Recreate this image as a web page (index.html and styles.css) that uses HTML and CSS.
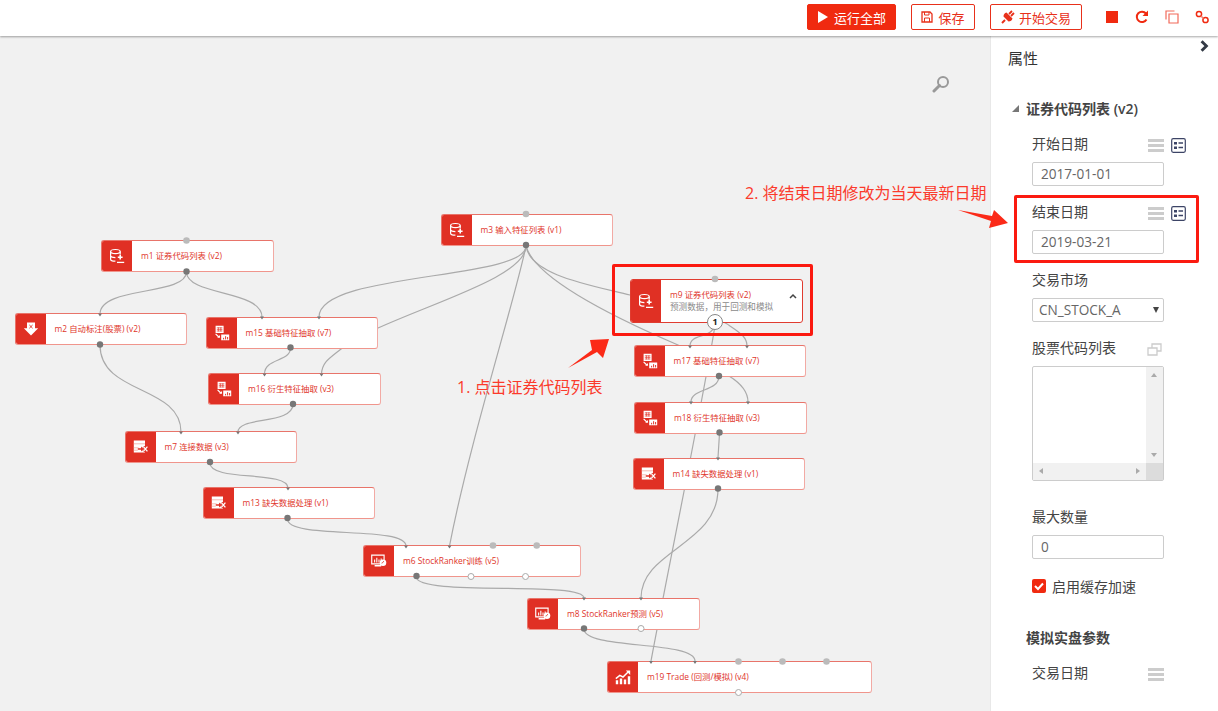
FILE: index.html
```html
<!DOCTYPE html>
<html lang="zh">
<head>
<meta charset="utf-8">
<title>策略画布</title>
<link rel="stylesheet" href="styles.css">
</head>
<body>
<svg class="defs" width="0" height="0" aria-hidden="true">
  <defs>
    <symbol id="i-db" viewBox="0 0 20 20">
      <ellipse cx="8" cy="4.500" rx="6" ry="2.600" fill="none" stroke="#fff" stroke-width="1.500"/>
      <path d="M2 4.500V14c0 1.500 3 2.500 6 2.500M14 4.500V8M2 9.500c0 1.500 3 2.500 6 2.500" fill="none" stroke="#fff" stroke-width="1.500"/>
      <path d="M14 8.500v6M11 11.500h6" stroke="#fff" stroke-width="2"/>
      <path d="M10 18h9" stroke="#fff" stroke-width="1.600"/>
    </symbol>
    <symbol id="i-down" viewBox="0 0 20 20">
      <path d="M5 2h10v7h4l-9 9-9-9h4z" fill="#fff"/>
      <path d="M8 5l4 4M12 5l-4 4" stroke="#e03024" stroke-width="1.200"/>
    </symbol>
    <symbol id="i-feat" viewBox="0 0 20 20">
      <path d="M2 1h10v9H2z" fill="#fff"/>
      <path d="M3.500 3.500h7M3.500 5.500h7M3.500 7.500h7M5.500 3v5M8.500 3v5" stroke="#e03024" stroke-width=".8"/>
      <path d="M2 11l4 4" stroke="#fff" stroke-width="1.500"/>
      <path d="M4 16h3.500v-3.500z" fill="#fff"/>
      <path d="M9 12h10v7H9z" fill="#fff"/>
      <path d="M12 18v-2M14.500 18v-4M17 18v-3" stroke="#e03024" stroke-width="1.200"/>
    </symbol>
    <symbol id="i-fix" viewBox="0 0 20 20">
      <path d="M1 2h14v15H1z" fill="#fff"/>
      <path d="M1 6h14M1 11h6M1 14h5" stroke="#f0a8a0" stroke-width="1"/>
      <path d="M6 12.500h6" stroke="#e03024" stroke-width="2"/>
      <path d="M10 9.500l3 3-3 3z" fill="#e03024"/>
      <path d="M13 9.500l5 6M18 9.500l-5 6" stroke="#e03024" stroke-width="3.600"/>
      <path d="M13 9.500l5 6M18 9.500l-5 6" stroke="#fff" stroke-width="1.600"/>
    </symbol>
    <symbol id="i-screen" viewBox="0 0 22 20">
      <path d="M1 2h17v12H1z" fill="none" stroke="#fff" stroke-width="1.600"/>
      <path d="M5 12V8M8 12V5.500M11 12V8M14 12V6.500" stroke="#fff" stroke-width="1.500"/>
      <path d="M5 16.500h9" stroke="#fff" stroke-width="1.800"/>
      <circle cx="16.500" cy="12.500" r="4.500" fill="#fff"/>
      <path d="M14.500 13l2-1 1-2" stroke="#e03024" stroke-width="1" fill="none"/>
    </symbol>
    <symbol id="i-trade" viewBox="0 0 20 20">
      <path d="M1 12l5-4 4 2 7-7" fill="none" stroke="#fff" stroke-width="1.800"/>
      <path d="M13.500 2H19v5.500z" fill="#fff"/>
      <path d="M1 14h3v5H1zM6 12h3v7H6zM11 13h3v6h-3zM16 9h3v10h-3z" fill="#fff"/>
    </symbol>
  </defs>
</svg>

<header class="toolbar">
  <button class="btn btn-run" type="button">
    <svg class="btn-icon" viewBox="0 0 12 14"><path d="M1 1l10 6-10 6z" fill="#fff"/></svg>运行全部
  </button>
  <button class="btn btn-save" type="button">
    <svg class="btn-icon-sm" viewBox="0 0 12 12"><path d="M1 1h8l2 2v8H1z" fill="none" stroke="#e8301a" stroke-width="1.300"/><path d="M3.500 1v3h4.500V1M3.500 11V7h5v4" fill="none" stroke="#e8301a" stroke-width="1"/></svg>保存
  </button>
  <button class="btn btn-trade" type="button">
    <svg class="btn-icon btn-icon-plug" viewBox="0 0 14 14"><path d="M1 13l3-3" stroke="#e8301a" stroke-width="2"/><path d="M2.500 6.500l5 5c2 0 3.500-1 4-3L5.500 2.500c-2 .5-3 2-3 4z" fill="#e8301a"/><path d="M8 4l3-3M10 6l3-3" stroke="#e8301a" stroke-width="1.800"/></svg>开始交易
  </button>
  <div class="tools">
    <svg class="tool" viewBox="0 0 16 16"><path d="M2 2h12v12H2z" fill="#f02a10"/></svg>
    <svg class="tool" viewBox="0 0 16 16"><path d="M12.500 10.500A5.200 5.200 0 1 1 12 4.500" fill="none" stroke="#f02a10" stroke-width="2"/><path d="M14 1.500v5.500H8.500z" fill="#f02a10"/></svg>
    <svg class="tool" viewBox="0 0 16 16"><path d="M2 10.500V2h8.500M5 5h9v9H5z" fill="none" stroke="#f26a5a" stroke-width="1.200"/></svg>
    <svg class="tool" viewBox="0 0 16 16"><circle cx="5" cy="5" r="2.600" fill="none" stroke="#f02a10" stroke-width="1.500"/><circle cx="11.500" cy="11" r="2.600" fill="none" stroke="#f02a10" stroke-width="1.500"/><path d="M7 7l2.500 2.500" stroke="#f4806f" stroke-width="1.500"/></svg>
  </div>
</header>

<main class="workspace">
  <section class="canvas">
    <svg class="edges" viewBox="0 36 990 675" aria-hidden="true">
      <g fill="none" stroke="#aaa" stroke-width="1.200">
        <path d="M186.500 272C186 296 100 286 100 314"/>
        <path d="M186.500 272C187 296 262 290 262 317"/>
        <path d="M526 246C526 280 319 272 319 317"/>
        <path d="M526 246C526 275 440 300 378 328C360 336 350 340 341 349C330 358 322 362 321.500 374"/>
        <path d="M526 246C515 300 470 440 449.500 546"/>
        <path d="M526 246C530 275 590 285 630 295C680 305 720 318 730 326C742 334 747 338 747 346"/>
        <path d="M526 246C535 280 620 320 678 345C700 358 720 368 729 376C742 384 748 392 748 402"/>
        <path d="M100 345C100 395 181 385 181 432"/>
        <path d="M293 404C293 425 238 416 238 432"/>
        <path d="M210 463C210 482 288 470 288 488"/>
        <path d="M287.500 519C287.500 540 406 525 406 546"/>
        <path d="M416.500 577C416.500 597 584 580 584 598"/>
        <path d="M718 489C718 545 641 550 641 598"/>
        <path d="M584 629C584 650 695 640 695 661"/>
        <path d="M719.500 433L718 458"/>
        <path d="M719 376C719 392 691 388 691 402"/>
        <path d="M290.500 348C290.500 362 264.500 358 264.500 374"/>
        <path d="M715 322C715 340 690 332 690 346"/>
        <path d="M715 325C708 375 665 585 651 661"/>
      </g>
    </svg>

    <div class="node n-m1"><div class="node-icon"><svg class="ico"><use href="#i-db"/></svg></div><div class="node-body"><p class="node-title">m1 证券代码列表 (v2)</p></div></div>
    <div class="node n-m2"><div class="node-icon"><svg class="ico"><use href="#i-down"/></svg></div><div class="node-body"><p class="node-title">m2 自动标注(股票) (v2)</p></div></div>
    <div class="node n-m3"><div class="node-icon"><svg class="ico"><use href="#i-db"/></svg></div><div class="node-body"><p class="node-title">m3 输入特征列表 (v1)</p></div></div>
    <div class="node n-m15"><div class="node-icon"><svg class="ico"><use href="#i-feat"/></svg></div><div class="node-body"><p class="node-title">m15 基础特征抽取 (v7)</p></div></div>
    <div class="node n-m16"><div class="node-icon"><svg class="ico"><use href="#i-feat"/></svg></div><div class="node-body"><p class="node-title">m16 衍生特征抽取 (v3)</p></div></div>
    <div class="node n-m7"><div class="node-icon"><svg class="ico"><use href="#i-fix"/></svg></div><div class="node-body"><p class="node-title">m7 连接数据 (v3)</p></div></div>
    <div class="node n-m13"><div class="node-icon"><svg class="ico"><use href="#i-fix"/></svg></div><div class="node-body"><p class="node-title">m13 缺失数据处理 (v1)</p></div></div>
    <div class="node n-m6 node-wide"><div class="node-icon"><svg class="ico"><use href="#i-screen"/></svg></div><div class="node-body"><p class="node-title">m6 StockRanker训练 (v5)</p></div></div>
    <div class="node n-m9 node-open"><div class="node-icon"><svg class="ico"><use href="#i-db"/></svg></div><div class="node-body"><p class="node-title">m9 证券代码列表 (v2)</p><p class="node-desc">预测数据，用于回测和模拟</p></div><svg class="node-caret" viewBox="0 0 8 6"><path d="M1 5l3-3 3 3" fill="none" stroke="#444" stroke-width="1.500"/></svg></div>
    <div class="node n-m17"><div class="node-icon"><svg class="ico"><use href="#i-feat"/></svg></div><div class="node-body"><p class="node-title">m17 基础特征抽取 (v7)</p></div></div>
    <div class="node n-m18"><div class="node-icon"><svg class="ico"><use href="#i-feat"/></svg></div><div class="node-body"><p class="node-title">m18 衍生特征抽取 (v3)</p></div></div>
    <div class="node n-m14"><div class="node-icon"><svg class="ico"><use href="#i-fix"/></svg></div><div class="node-body"><p class="node-title">m14 缺失数据处理 (v1)</p></div></div>
    <div class="node n-m8"><div class="node-icon"><svg class="ico"><use href="#i-screen"/></svg></div><div class="node-body"><p class="node-title">m8 StockRanker预测 (v5)</p></div></div>
    <div class="node n-m19 node-wide"><div class="node-icon"><svg class="ico"><use href="#i-trade"/></svg></div><div class="node-body"><p class="node-title">m19 Trade (回测/模拟) (v4)</p></div></div>

    <svg class="ports" viewBox="0 36 990 675" aria-hidden="true">
      <g fill="#bbb">
        <circle cx="186.500" cy="240.500" r="3.300"/><circle cx="526" cy="214" r="3.300"/><circle cx="715" cy="279" r="3.300"/>
        <circle cx="493" cy="545.500" r="3.300"/><circle cx="536.700" cy="545.500" r="3.300"/>
        <circle cx="738.500" cy="661.500" r="3.300"/><circle cx="782.500" cy="661.500" r="3.300"/><circle cx="826.500" cy="661.500" r="3.300"/>
      </g>
      <g fill="#777">
        <circle cx="186.500" cy="271.500" r="3.200"/><circle cx="100" cy="344.500" r="3.200"/><circle cx="526" cy="245" r="3.200"/>
        <circle cx="290.500" cy="347.500" r="3.200"/><circle cx="293" cy="404" r="3.200"/><circle cx="210" cy="462" r="3.200"/>
        <circle cx="287.500" cy="518" r="3.200"/><circle cx="416.500" cy="576" r="3.200"/><circle cx="719" cy="376" r="3.200"/>
        <circle cx="719.500" cy="432.500" r="3.200"/><circle cx="718" cy="488.500" r="3.200"/><circle cx="584" cy="628.500" r="3.200"/>
      </g>
      <g fill="#777">
        <path d="M98 313.500h4l-2 3zM260 316.500h4l-2 3zM317 316.500h4l-2 3zM262.500 373.500h4l-2 3zM319.500 373.500h4l-2 3zM179 431.500h4l-2 3zM236 431.500h4l-2 3zM286 487.500h4l-2 3zM404 545.500h4l-2 3zM447.500 545.500h4l-2 3zM688 345.500h4l-2 3zM745 345.500h4l-2 3zM689 401.500h4l-2 3zM746 401.500h4l-2 3zM716 457.500h4l-2 3zM582 597.500h4l-2 3zM639 597.500h4l-2 3zM649 661h4l-2 3zM693 661h4l-2 3z"/>
      </g>
      <g fill="#fff" stroke="#aaa" stroke-width="1">
        <circle cx="471" cy="576.500" r="3"/><circle cx="525.500" cy="576.500" r="3"/><circle cx="641" cy="628.500" r="3"/><circle cx="738.500" cy="692.500" r="3"/>
      </g>
    </svg>
    <div class="badge">1</div>

    <button class="zoom-btn" type="button" aria-label="搜索">
      <svg viewBox="0 0 18 18" width="18" height="18"><circle cx="11" cy="7" r="5" fill="none" stroke="#999" stroke-width="2"/><path d="M7.500 10.500L2 16" stroke="#999" stroke-width="3" stroke-linecap="round"/></svg>
    </button>
  </section>

  <aside class="panel">
    <svg class="panel-toggle" viewBox="0 0 8 10"><path d="M2 1l4 4-4 4" fill="none" stroke="#333a45" stroke-width="2.400"/></svg>
    <h2 class="panel-title">属性</h2>
    <h3 class="section-title"><span class="tri"></span>证券代码列表 (v2)</h3>
    <div class="field">
      <div class="field-head"><label class="field-label">开始日期</label><span class="field-tools"><span class="bars"></span><svg class="form-ico" viewBox="0 0 15 15"><rect x=".7" y=".7" width="13.600" height="13.600" rx="1.500" fill="none" stroke="#3c4466" stroke-width="1.200"/><path d="M3 4h3v2.500H3zM3 8.500h3V11H3z" fill="#3c4466"/><path d="M7.500 5h4.500M7.500 9.500h4.500" stroke="#3c4466" stroke-width="1.500"/></svg></span></div>
      <div class="input">2017-01-01</div>
    </div>
    <div class="field">
      <div class="field-head"><label class="field-label">结束日期</label><span class="field-tools"><span class="bars"></span><svg class="form-ico" viewBox="0 0 15 15"><rect x=".7" y=".7" width="13.600" height="13.600" rx="1.500" fill="none" stroke="#3c4466" stroke-width="1.200"/><path d="M3 4h3v2.500H3zM3 8.500h3V11H3z" fill="#3c4466"/><path d="M7.500 5h4.500M7.500 9.500h4.500" stroke="#3c4466" stroke-width="1.500"/></svg></span></div>
      <div class="input">2019-03-21</div>
    </div>
    <div class="field">
      <div class="field-head"><label class="field-label">交易市场</label></div>
      <div class="input input-select">CN_STOCK_A<span class="select-caret"></span></div>
    </div>
    <div class="field field-area">
      <div class="field-head"><label class="field-label">股票代码列表</label><span class="field-tools"><svg class="copy-ico" viewBox="0 0 15 13"><path d="M1 5h9v7H1z" fill="#fff" stroke="#ccc" stroke-width="1.300"/><path d="M5 5V1h9v7h-4" fill="none" stroke="#ccc" stroke-width="1.300"/></svg></span></div>
      <div class="textarea">
        <div class="textarea-main"><div class="textarea-blank"></div>
          <div class="sb-v"><span class="arr arr-up"></span><span class="arr arr-down"></span></div>
        </div>
        <div class="sb-h"><span class="arr arr-left"></span><span class="arr arr-right"></span><span class="sb-corner"></span></div>
      </div>
    </div>
    <div class="field">
      <div class="field-head"><label class="field-label">最大数量</label></div>
      <div class="input">0</div>
    </div>
    <div class="check-row"><svg class="check" viewBox="0 0 14 14"><rect width="14" height="14" rx="2" fill="#f02a10"/><path d="M3 7l3 3 5-5.500" fill="none" stroke="#fff" stroke-width="2"/></svg><span>启用缓存加速</span></div>
    <h3 class="section-title section-plain">模拟实盘参数</h3>
    <div class="field-head field-last"><label class="field-label">交易日期</label><span class="field-tools"><span class="bars"></span></span></div>
  </aside>
</main>

<div class="mark mark-node"></div>
<div class="mark mark-field"></div>
<p class="note note-one">1. 点击证券代码列表</p>
<p class="note note-two">2. 将结束日期修改为当天最新日期</p>
<svg class="arrows" viewBox="0 0 1218 711" aria-hidden="true">
  <polygon fill="#fb2a18" points="568,368 592,350 590,340 609,339 603,358 597,352"/>
  <polygon fill="#fb2a18" points="958,210 992,216 994,210 1008,223 989,228 991,221"/>
</svg>
</body>
</html>
```
FILE: styles.css
```css
* { box-sizing: border-box; }
html, body { margin: 0; height: 100%; overflow: hidden; }
body {
  position: relative;
  display: flex;
  flex-direction: column;
  width: 1218px;
  height: 711px;
  background: #fff;
  color: #444;
  font-family: "Open Sans", "Noto Sans CJK SC", sans-serif;
  font-size: 13px;
}
.defs { position: absolute; }
p, h2, h3 { margin: 0; font-weight: normal; }

/* toolbar */
.toolbar {
  position: relative;
  z-index: 2;
  flex: none;
  display: flex;
  align-items: center;
  height: 36px;
  padding: 0 0 2px 807px;
  background: #fff;
  box-shadow: 0 1px 2px rgba(0, 0, 0, .35);
}
.btn {
  display: flex;
  align-items: center;
  justify-content: center;
  height: 26px;
  padding: 0;
  border: 1px solid #e8301a;
  border-radius: 2px;
  background: #fff;
  color: #e8301a;
  font: inherit;
  font-size: 13px;
}
.btn-run { width: 89px; background: #f02a10; color: #fff; border-color: #f02a10; }
.btn-save { width: 64px; margin-left: 15px; }
.btn-trade { width: 92px; margin-left: 15px; }
.btn-icon { width: 12px; height: 14px; margin-right: 5px; }
.btn-icon-plug { width: 14px; margin-right: 4px; }
.btn-icon-sm { width: 12px; height: 12px; margin-right: 5px; }
.tools { display: flex; margin-left: 22px; gap: 14px; }
.tool { width: 16px; height: 16px; }

/* workspace */
.workspace { flex: 1; display: flex; min-height: 0; }
.canvas {
  position: relative;
  width: 990px;
  background: #f1f1f1;
  overflow: hidden;
}
.edges, .ports {
  position: absolute;
  left: 0;
  top: 0;
  width: 990px;
  height: 675px;
}
.ports { z-index: 2; }
.zoom-btn {
  position: absolute;
  left: 932px;
  top: 39px;
  padding: 0;
  border: 0;
  background: none;
}

/* nodes */
.node {
  position: absolute;
  display: flex;
  width: 172.500px;
  height: 32px;
  border: 1px solid #e8746a;
  border-right-color: #f2aaa4;
  border-bottom-color: #f0958c;
  border-radius: 3px;
  background: #fff;
  overflow: hidden;
}
.node-icon {
  flex: none;
  display: flex;
  align-items: center;
  justify-content: center;
  width: 30px;
  background: #e03024;
}
.ico { width: 16px; height: 16px; }
.node-body {
  display: flex;
  flex-direction: column;
  justify-content: center;
  padding-left: 9px;
  white-space: nowrap;
}
.node-title { color: #e0352b; font-size: 8.400px; line-height: 12px; }
.node-desc { color: #8a8a8a; font-size: 8.600px; line-height: 12px; }
.node-caret { position: absolute; right: 5px; top: 13px; width: 8px; height: 6px; }
.node-open { border-color: #e03c30; }

.n-m1 { left: 101px; top: 204px; }
.n-m2 { left: 14.500px; top: 277px; }
.n-m3 { left: 440.500px; top: 178px; }
.n-m15 { left: 205.500px; top: 280.500px; }
.n-m16 { left: 208px; top: 337px; }
.n-m7 { left: 124.500px; top: 395px; }
.n-m13 { left: 202.500px; top: 451px; }
.n-m6 { left: 363px; top: 509px; width: 218px; }
.n-m9 { left: 630px; top: 243px; height: 44px; }
.n-m17 { left: 633.500px; top: 309px; }
.n-m18 { left: 634px; top: 365.500px; }
.n-m14 { left: 632.500px; top: 421.500px; }
.n-m8 { left: 527px; top: 561.500px; }
.n-m19 { left: 607px; top: 625px; width: 264.500px; }

.badge {
  position: absolute;
  z-index: 3;
  left: 707px;
  top: 278px;
  width: 16px;
  height: 16px;
  border: 1px solid #888;
  border-radius: 50%;
  background: #fff;
  color: #222;
  font-size: 9px;
  font-weight: 700;
  line-height: 14px;
  text-align: center;
}

/* panel */
.panel {
  position: relative;
  flex: 1;
  padding: 0 0 0 41px;
  border-left: 1px solid #e8e8e8;
  background: #fff;
  overflow: hidden;
}
.panel-toggle { position: absolute; left: 208px; top: 4px; width: 10px; height: 12px; }
.panel-title {
  margin: 12px 0 0 -24px;
  color: #333;
  font-size: 15px;
  line-height: 20px;
}
.section-title {
  position: relative;
  margin: 31px 0 0 -6px;
  color: #444;
  font-size: 14px;
  font-weight: 600;
  line-height: 20px;
}
.section-plain { margin-top: 32px; }
.tri {
  position: absolute;
  left: -14px;
  top: 6px;
  width: 0;
  height: 0;
  border-left: 7px solid transparent;
  border-bottom: 7px solid #777;
}
.field { width: 132px; margin-bottom: 17px; }
.section-title + .field { margin-top: 16px; }
.field-head {
  display: flex;
  justify-content: space-between;
  align-items: center;
  width: 132px;
  height: 20px;
  margin-bottom: 7px;
}
.field-label { margin-top: -2px; color: #444; font-size: 14px; line-height: 20px; }
.field-tools { display: flex; align-items: center; gap: 7px; }
.bars {
  width: 16px;
  height: 13px;
  background: repeating-linear-gradient(#ccc 0 3px, transparent 3px 5px);
}
.form-ico { width: 15px; height: 15px; margin-right: -22px; }
.copy-ico { width: 15px; height: 13px; margin-right: 2px; }
.input {
  position: relative;
  width: 132px;
  height: 24px;
  padding-left: 8px;
  border: 1px solid #ccc;
  border-radius: 2px;
  background: #fff;
  color: #666;
  font-size: 13.600px;
  line-height: 22px;
}
.input-select { padding-left: 6px; }
.select-caret {
  position: absolute;
  right: 4px;
  top: 8px;
  width: 0;
  height: 0;
  border-left: 3.500px solid transparent;
  border-right: 3.500px solid transparent;
  border-top: 6px solid #444;
}
.field-area { margin-bottom: 27px; }
.textarea {
  display: flex;
  flex-direction: column;
  width: 132px;
  height: 115px;
  border: 1px solid #ccc;
  border-radius: 2px;
}
.textarea-main { flex: 1; display: flex; }
.textarea-blank { flex: 1; }
.sb-v {
  position: relative;
  width: 17px;
  background: #f1f1f1;
}
.sb-h {
  position: relative;
  height: 17px;
  background: #f1f1f1;
}
.sb-corner {
  position: absolute;
  right: 0;
  top: 0;
  width: 17px;
  height: 17px;
  background: #dcdcdc;
}
.arr { position: absolute; width: 0; height: 0; }
.arr-up { left: 5px; top: 6px; border: 3.500px solid transparent; border-top: 0; border-bottom: 4px solid #aaa; }
.arr-down { left: 5px; bottom: 6px; border: 3.500px solid transparent; border-bottom: 0; border-top: 4px solid #aaa; }
.arr-left { left: 6px; top: 5px; border: 3.500px solid transparent; border-left: 0; border-right: 4px solid #aaa; }
.arr-right { right: 23px; top: 5px; border: 3.500px solid transparent; border-right: 0; border-left: 4px solid #aaa; }
.check-row {
  display: flex;
  align-items: center;
  gap: 6px;
  height: 20px;
  margin-top: 1px;
  color: #444;
  font-size: 14px;
}
.check { width: 14px; height: 14px; }
.field-last { margin-top: 16px; }

/* annotations */
.mark {
  position: absolute;
  z-index: 5;
  border: 3px solid #fb1a10;
  border-radius: 2px;
}
.mark-node { left: 612px; top: 264px; width: 201px; height: 72px; }
.mark-field { left: 1014px; top: 195px; width: 185px; height: 68px; }
.note {
  position: absolute;
  z-index: 5;
  color: #fb3a2c;
  font-size: 16px;
  line-height: 22px;
  white-space: nowrap;
}
.note-one { left: 457px; top: 376px; }
.note-two { left: 745px; top: 182px; }
.arrows {
  position: absolute;
  z-index: 5;
  left: 0;
  top: 0;
  width: 1218px;
  height: 711px;
  pointer-events: none;
}
```
